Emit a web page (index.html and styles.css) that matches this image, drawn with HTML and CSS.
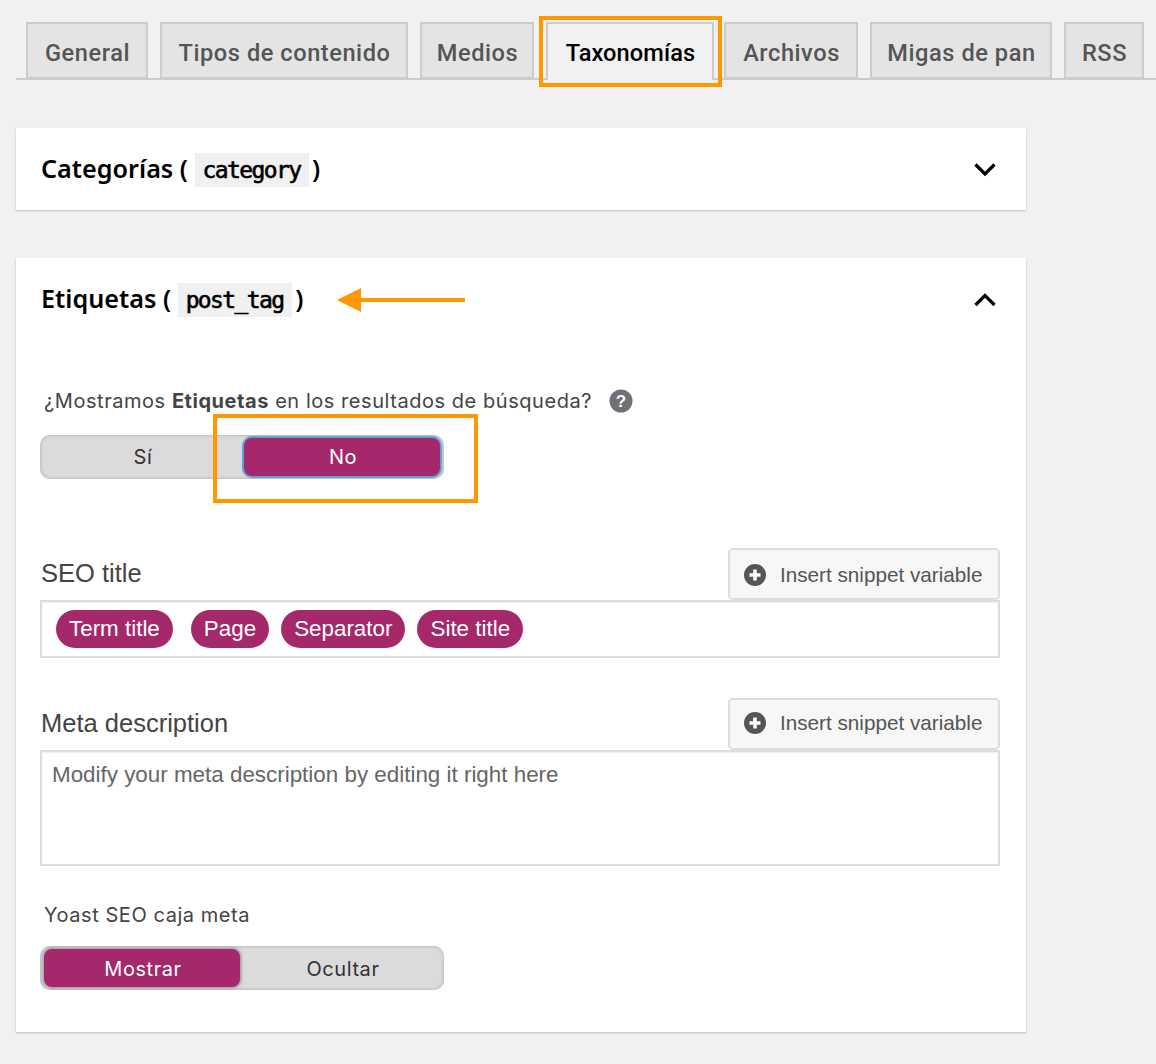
FILE: index.html
```html
<!DOCTYPE html>
<html lang="es">
<head>
<meta charset="utf-8">
<title>Taxonomías</title>
<link rel="stylesheet" href="styles.css">
</head>
<body>
<nav class="tabs">
  <a class="tab tab-general">General</a>
  <a class="tab tab-tipos">Tipos de contenido</a>
  <a class="tab tab-medios">Medios</a>
  <a class="tab tab-active">Taxonomías</a>
  <a class="tab tab-archivos">Archivos</a>
  <a class="tab tab-migas">Migas de pan</a>
  <a class="tab tab-rss">RSS</a>
</nav>

<section class="card card-collapsed">
  <header class="card-head">
    <h2 class="card-title">Categorías ( <code class="slug">category</code> )</h2>
    <svg class="chevron" width="24" height="16" viewBox="0 0 24 16"><path d="M2.500 3.500 12 13l9.500-9.500" fill="none" stroke="#000" stroke-width="3.200"/></svg>
  </header>
</section>

<section class="card card-open">
  <header class="card-head">
    <h2 class="card-title">Etiquetas ( <code class="slug">post_tag</code> )</h2>
    <svg class="chevron chevron-up" width="24" height="16" viewBox="0 0 24 16"><path d="M2.500 13 12 3.500 21.500 13" fill="none" stroke="#000" stroke-width="3.200"/></svg>
  </header>

  <div class="question">
    <span>¿Mostramos <b>Etiquetas</b> en los resultados de búsqueda?</span>
    <svg class="help" width="24" height="24" viewBox="0 0 24 24"><circle cx="12" cy="12" r="11.500" fill="#707075"/><text x="12" y="18" text-anchor="middle" class="help-mark">?</text></svg>
  </div>
  <div class="toggle toggle-first">
    <span class="opt">Sí</span>
    <span class="opt opt-on opt-focus">No</span>
  </div>

  <div class="field-head field-head-seo">
    <span class="field-label">SEO title</span>
    <button class="snippet snippet-seo">
      <svg width="22" height="22" viewBox="0 0 22 22"><circle cx="11" cy="11" r="11" fill="#555"/><path d="M11 5.500v11M5.500 11h11" stroke="#fff" stroke-width="3.600"/></svg>
      <span>Insert snippet variable</span>
    </button>
  </div>
  <div class="input input-title">
    <span class="pill pill-first">Term title</span>
    <span class="pill">Page</span>
    <span class="pill">Separator</span>
    <span class="pill">Site title</span>
  </div>

  <div class="field-head field-head-meta">
    <span class="field-label">Meta description</span>
    <button class="snippet snippet-meta">
      <svg width="22" height="22" viewBox="0 0 22 22"><circle cx="11" cy="11" r="11" fill="#555"/><path d="M11 5.500v11M5.500 11h11" stroke="#fff" stroke-width="3.600"/></svg>
      <span>Insert snippet variable</span>
    </button>
  </div>
  <div class="input input-desc">Modify your meta description by editing it right here</div>

  <div class="question question-yoast">Yoast SEO caja meta</div>
  <div class="toggle toggle-last">
    <span class="opt opt-on">Mostrar</span>
    <span class="opt">Ocultar</span>
  </div>
</section>

<div class="mark mark-tab"></div>
<div class="mark mark-no"></div>
<svg class="mark-arrow" width="130" height="28" viewBox="0 0 130 28"><path d="M129 12H25V2L1 14l24 12V16h104z" fill="#ff9800"/></svg>
</body>
</html>
```
FILE: styles.css
```css
* { box-sizing: border-box; }
html, body { margin: 0; padding: 0; }
body {
  position: relative;
  height: 1064px;
  overflow: hidden;
  background: #f1f1f1;
  padding: 22px 0 0 16px;
  font-family: Roboto, "Liberation Sans", sans-serif;
  color: #444;
}

/* tabs */
.tabs {
  display: flex;
  gap: 12px;
  height: 58px;
  padding-left: 10px;
  border-bottom: 2px solid #ccc;
}
.tab {
  display: flex;
  align-items: center;
  justify-content: center;
  height: 57px;
  padding: 4px 0 0 1px;
  border: 2px solid #ccc;
  background: #e4e4e4;
  color: #555;
  font-size: 23.600px;
  font-weight: 500;
  letter-spacing: .55px;
}
.tab-general { width: 122px; }
.tab-tipos { width: 248px; }
.tab-medios { width: 114px; }
.tab-active {
  width: 168px;
  height: 58px;
  margin-right: -2px;
  padding-top: 2px;
  background: #f1f1f1;
  border-bottom: 0;
  color: #000;
  letter-spacing: .1px;
}
.tab-archivos { width: 134px; }
.tab-migas { width: 182px; }
.tab-rss { width: 80px; }

/* cards */
.card {
  width: 1010px;
  background: #fff;
  box-shadow: 0 1px 2px rgba(0,0,0,.22);
}
.card-collapsed { height: 82px; margin-top: 48px; }
.card-open { height: 774px; margin-top: 48px; padding: 0 26px 0 25px; }
.card-head {
  display: flex;
  align-items: center;
  justify-content: space-between;
  height: 82px;
}
.card-collapsed .card-head { padding: 0 29px 0 25px; }
.card-open .card-head { padding-right: 3px; }
.card-title {
  margin: 0;
  color: #000;
  font-size: 25.200px;
  font-weight: 600;
  font-family: "Noto Sans", sans-serif;
}
.slug {
  display: inline-block;
  margin-right: -3px;
  padding: 0 8px;
  background: #f0f0f0;
  font-family: "DejaVu Sans Mono", monospace;
  font-size: 23px;
  font-weight: 400;
  line-height: 34px;
  letter-spacing: -1.600px;
  -webkit-text-stroke: .6px #000;
}
.chevron { display: block; }
.chevron-up { margin-top: 2px; }

/* question */
.question {
  display: flex;
  align-items: center;
  gap: 17px;
  height: 24px;
  margin: 49px 0 0 3px;
  font-family: Inter, sans-serif;
  font-size: 20px;
  letter-spacing: .55px;
  color: #444;
}
.question b { font-weight: 700; }
.help-mark { fill: #fff; font: 700 17px "Liberation Sans", sans-serif; letter-spacing: 0; }
.question-yoast { margin-top: 37px; }

/* toggles */
.toggle {
  display: flex;
  gap: 4px;
  width: 404px;
  height: 44px;
  padding: 3px 4px;
  margin-left: -1px;
  background: #dbdbdb;
  border-radius: 10px;
  box-shadow: inset 0 0 3px 1px #bdbdbd;
  font-family: Inter, sans-serif;
  font-size: 20px;
  letter-spacing: .55px;
}
.toggle-first { margin-top: 22px; }
.toggle-last { margin-top: 19px; }
.opt {
  display: flex;
  flex: 1;
  align-items: center;
  justify-content: center;
  padding-left: 2px;
  border-radius: 8px;
  color: #333;
}
.toggle-last .opt { padding-top: 2px; }
.opt-on {
  background: #a4286a;
  color: #fff;
  box-shadow: 0 0 2px 2px #b0a8ac;
}
.opt-focus { box-shadow: 0 0 1px 2px #5b9dd9; }

/* fields */
.field-head {
  display: flex;
  align-items: center;
  justify-content: space-between;
  height: 52px;
}
.field-head-seo { margin-top: 69px; }
.field-head-meta { margin-top: 40px; }
.field-label {
  margin-top: -1px;
  font-family: "Liberation Sans", Arial, sans-serif;
  font-size: 25.500px;
  color: #444;
}
.snippet {
  display: flex;
  align-items: center;
  gap: 14px;
  width: 272px;
  height: 52px;
  padding: 0 0 0 14px;
  background: #f7f7f7;
  border: 2px solid #ddd;
  border-radius: 5px;
  font-family: "Liberation Sans", Arial, sans-serif;
  font-size: 20.700px;
  color: #555;
}
.snippet-seo { padding-top: 2px; }
.snippet-meta { padding-bottom: 2px; }
.input {
  margin-left: -1px;
  border: 2px solid #ddd;
  background: #fff;
  box-shadow: inset 0 1px 2px rgba(0,0,0,.07);
  font-family: "Liberation Sans", Arial, sans-serif;
}
.input-title {
  display: flex;
  gap: 12px;
  height: 58px;
  padding: 8px 0 0 14px;
}
.input-desc {
  height: 116px;
  padding: 10px 0 0 10px;
  font-size: 22.400px;
  color: #666;
}
.pill {
  display: flex;
  align-items: center;
  height: 38px;
  padding: 0 13px;
  border-radius: 19px;
  background: #a4286a;
  color: #fff;
  font-size: 22.400px;
}
.pill-first { margin-right: 6px; }

/* annotations over the screenshot */
.mark {
  position: absolute;
  border: 4px solid #ff9800;
  pointer-events: none;
}
.mark-tab { left: 539px; top: 16px; width: 183px; height: 71px; }
.mark-no { left: 213px; top: 414px; width: 265px; height: 89px; }
.mark-arrow { position: absolute; left: 336px; top: 286px; }
```
